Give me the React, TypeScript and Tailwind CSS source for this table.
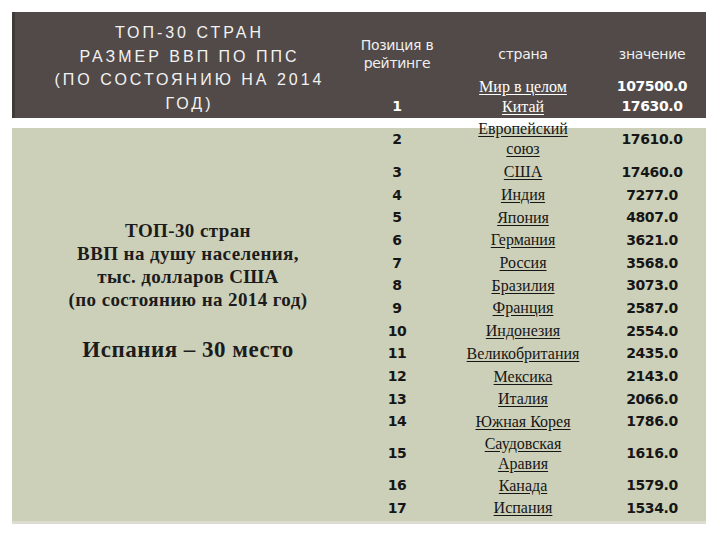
import React from 'react';

type Row = {
  pos: string;
  name: string[];
  val: string;
  h: string;
  dark?: boolean;
};

const rows: Row[] = [
  { pos: '', name: ['Мир в целом'], val: '107500.0', h: 'h-[20px]', dark: true },
  { pos: '1', name: ['Китай'], val: '17630.0', h: 'h-[21px]', dark: true },
  { pos: '2', name: ['Европейский', 'союз'], val: '17610.0', h: 'h-[44px]' },
  { pos: '3', name: ['США'], val: '17460.0', h: 'h-[22.7px]' },
  { pos: '4', name: ['Индия'], val: '7277.0', h: 'h-[22.7px]' },
  { pos: '5', name: ['Япония'], val: '4807.0', h: 'h-[22.7px]' },
  { pos: '6', name: ['Германия'], val: '3621.0', h: 'h-[22.7px]' },
  { pos: '7', name: ['Россия'], val: '3568.0', h: 'h-[22.7px]' },
  { pos: '8', name: ['Бразилия'], val: '3073.0', h: 'h-[22.7px]' },
  { pos: '9', name: ['Франция'], val: '2587.0', h: 'h-[22.7px]' },
  { pos: '10', name: ['Индонезия'], val: '2554.0', h: 'h-[22.7px]' },
  { pos: '11', name: ['Великобритания'], val: '2435.0', h: 'h-[22.7px]' },
  { pos: '12', name: ['Мексика'], val: '2143.0', h: 'h-[22.7px]' },
  { pos: '13', name: ['Италия'], val: '2066.0', h: 'h-[22.7px]' },
  { pos: '14', name: ['Южная Корея'], val: '1786.0', h: 'h-[22.7px]' },
  { pos: '15', name: ['Саудовская', 'Аравия'], val: '1616.0', h: 'h-[41px]' },
  { pos: '16', name: ['Канада'], val: '1579.0', h: 'h-[22.7px]' },
  { pos: '17', name: ['Испания'], val: '1534.0', h: 'h-[22.7px]' },
];

const cols = 'grid grid-cols-[66px_186px_72px] items-center justify-items-center';

export default function App() {
  return (
    <div className="w-[720px] h-[540px] bg-white pt-[12px] pl-[12px]">
      {/* background: dark band, white gap, light panel */}
      <div className="w-[694px] h-[512px] flex bg-[linear-gradient(to_bottom,#524a48_0px,#524a48_106px,#ffffff_106px,#ffffff_116px,#cdd0b9_116px,#cdd0b9_509px,#dcddd0_509px)]">
        {/* left column */}
        <div className="w-[352px] flex flex-col">
          <div className="h-[106px] pt-[9px] border-l-[3px] border-[#403a39] text-center text-[16px] leading-[23.7px] tracking-[3px] text-[#f2f2f2] font-['Liberation_Sans',sans-serif]">
            <div>ТОП-30 СТРАН</div>
            <div>РАЗМЕР ВВП ПО ППС</div>
            <div>(ПО СОСТОЯНИЮ НА 2014</div>
            <div>ГОД)</div>
          </div>
          <div className="mt-[10px] pt-[91px] text-center font-bold text-[#1c1c1c] font-['Liberation_Serif',serif]">
            <div className="text-[19px] leading-[23px] tracking-[0.4px]">
              <div>ТОП-30 стран</div>
              <div>ВВП на душу населения,</div>
              <div>тыс. долларов США</div>
              <div>(по состоянию на 2014 год)</div>
            </div>
            <div className="mt-[24px] text-[23px] leading-[30px] tracking-[0.5px]">Испания – 30 место</div>
          </div>
        </div>

        {/* table */}
        <div className="mt-[20px]">
          <div className={`${cols} h-[44px] text-[#efefef] text-[14px] tracking-[-0.3px] font-['DejaVu_Sans',sans-serif]`}>
            <div className="text-center leading-[18px] whitespace-nowrap">
              <div>Позиция в</div>
              <div>рейтинге</div>
            </div>
            <div>страна</div>
            <div className="whitespace-nowrap">значение</div>
          </div>
          {rows.map((r, i) => (
            <div
              key={i}
              className={`${cols} ${r.h} ${r.dark ? 'text-white' : 'text-[#161616]'}`}
            >
              <div className="font-bold text-[14px] tracking-[-0.4px] font-['DejaVu_Sans',sans-serif]">{r.pos}</div>
              <div className="text-center text-[16px] leading-[20px] font-['Liberation_Serif',serif] whitespace-nowrap">
                {r.name.map((n) => (
                  <div key={n}>
                    <span className="underline underline-offset-[2px]">{n}</span>
                  </div>
                ))}
              </div>
              <div className="font-bold text-[14px] tracking-[-0.4px] whitespace-nowrap font-['DejaVu_Sans',sans-serif]">{r.val}</div>
            </div>
          ))}
        </div>
      </div>
    </div>
  );
}
